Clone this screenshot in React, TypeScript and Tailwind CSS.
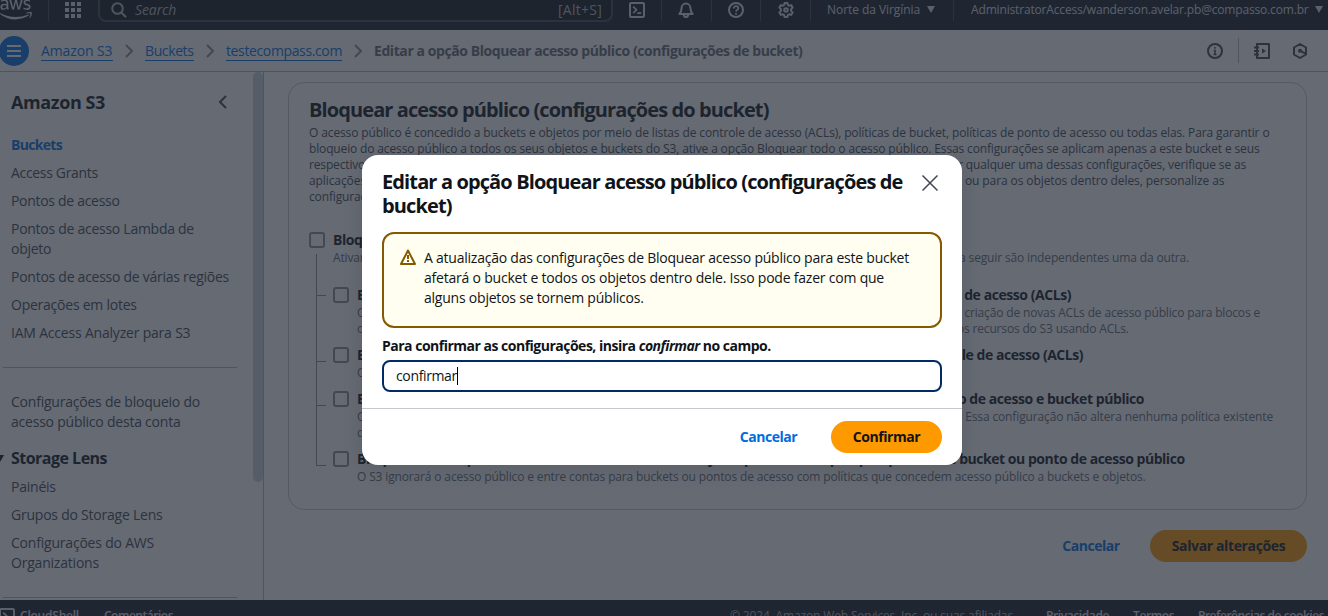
import type { ReactNode } from "react";
import { FaAws } from "react-icons/fa";

function Line({ className = "", children }: { className?: string; children: ReactNode }) {
  return <span className={`block whitespace-nowrap ${className}`}>{children}</span>;
}

function NavDivider({ className = "" }: { className?: string }) {
  return <span className={`block h-[22px] w-px shrink-0 bg-[#424650] ${className}`} />;
}

function NavIcon({ className = "", children }: { className?: string; children: ReactNode }) {
  return (
    <svg viewBox="0 0 16 16" className={`h-4 w-4 shrink-0 fill-none stroke-[#dedee3] stroke-2 ${className}`} strokeLinejoin="round">
      {children}
    </svg>
  );
}

function Caret({ className }: { className: string }) {
  return (
    <svg viewBox="0 0 8 7" className={`h-[7px] w-2 shrink-0 ${className}`}>
      <path d="M0 0h8L4 7z" />
    </svg>
  );
}

function TopNav() {
  return (
    <header className="-mt-[11px] flex h-[41px] shrink-0 items-center bg-[#161d26] text-[#dedee3]">
      <div className="flex w-12 items-center">
        <FaAws className="-ml-px h-[33px] w-[33px] text-[#dedee3]" />
      </div>
      <NavDivider />
      <div className="ml-4 grid grid-cols-3 gap-[2px]">
        {Array.from({ length: 9 }, (_, i) => (
          <span key={i} className="h-1 w-1 bg-[#dedee3]" />
        ))}
      </div>
      <div className="mt-[-7px] ml-[17px] flex h-8 w-[515px] shrink-0 items-center rounded-lg border-2 border-[#424650] bg-[#0f141a] pt-[7px] pr-[9px] pl-[11px] text-[14px] text-[#b4b4bb]">
        <svg viewBox="0 0 16 16" className="h-4 w-4 fill-none stroke-[#b4b4bb] stroke-2">
          <circle cx="6.5" cy="6.5" r="5.3" />
          <path d="M10.3 10.5 15 15.2" />
        </svg>
        <span className="ml-2 tracking-[-0.1px] italic">Search</span>
        <span className="ml-auto tracking-[0.25px]">[Alt+S]</span>
      </div>
      <NavIcon className="ml-4">
        <rect x="1" y="1" width="14" height="14" rx="1.2" />
        <path d="m4.2 4.6 3.3 3.2-3.3 3.2M8.2 11.2h4" strokeWidth="1.7" />
      </NavIcon>
      <NavDivider className="ml-4" />
      <NavIcon className="ml-4">
        <path d="M3.6 6a4.4 4.4 0 0 1 8.8 0c0 3 .8 4.3 2.2 6H1.4C2.8 10.3 3.6 9 3.6 6z" />
        <path d="M5.7 12.5c.2 1.5 1.1 2.5 2.3 2.5s2.1-1 2.3-2.5" />
      </NavIcon>
      <NavDivider className="ml-[17px]" />
      <NavIcon className="ml-4">
        <circle cx="8" cy="8" r="7" />
        <path d="M5.7 6.5c0-1.5 1-2.3 2.3-2.3s2.3.8 2.3 2c0 1.6-2.3 1.7-2.3 3.5M8 10.9v1.8" strokeWidth="1.7" />
      </NavIcon>
      <NavDivider className="ml-4" />
      <NavIcon className="ml-[17px]">
        <path d="M6.6 1h2.8l.5 2 1.2.7 2-.6 1.5 2.5-1.5 1.5v1.8l1.5 1.5-1.5 2.5-2-.6-1.2.7-.5 2H6.6l-.5-2-1.2-.7-2 .6-1.5-2.5 1.5-1.5V7.1L1.4 5.6l1.5-2.5 2 .6L6.1 3z" />
        <circle cx="8" cy="8" r="1.8" />
      </NavIcon>
      <NavDivider className="ml-4" />
      <span className="ml-4 text-[12px] font-medium tracking-[-0.06px] whitespace-nowrap">Norte da Virgínia</span>
      <Caret className="ml-[7px] fill-[#dedee3]" />
      <NavDivider className="ml-[18px]" />
      <span className="ml-[17px] text-[12px] font-medium tracking-[-0.17px] whitespace-nowrap">
        AdministratorAccess/wanderson.avelar.pb@compasso.com.br
      </span>
      <Caret className="ml-[6px] fill-[#dedee3]" />
    </header>
  );
}

function Separator({ className }: { className: string }) {
  return (
    <svg viewBox="0 0 8 14" className={`h-3.5 w-2 shrink-0 fill-none stroke-[#8c8c94] stroke-2 ${className}`}>
      <path d="m1 1 6 6-6 6" />
    </svg>
  );
}

function BreadcrumbBar() {
  const link = "whitespace-nowrap border-b border-[#006ce0] text-[#006ce0] leading-[19px]";
  return (
    <div className="flex h-[42px] shrink-0 items-center border-b border-[#b4b4bb] bg-white text-[14px]">
      <div className="-ml-px flex h-[30px] w-[30px] shrink-0 items-center justify-center rounded-full bg-[#006ce0]">
        <div className="flex w-3.5 flex-col gap-[3px]">
          <span className="h-0.5 bg-white" />
          <span className="h-0.5 bg-white" />
          <span className="h-0.5 bg-white" />
        </div>
      </div>
      <a className={`ml-3 w-[72px] tracking-[-0.11px] ${link}`}>Amazon S3</a>
      <Separator className="ml-3" />
      <a className={`ml-3 w-[49px] tracking-[-0.39px] ${link}`}>Buckets</a>
      <Separator className="ml-3" />
      <a className={`ml-3 w-[116px] tracking-[-0.37px] ${link}`}>testecompass.com</a>
      <Separator className="ml-3" />
      <span className="ml-3 font-bold tracking-[-0.42px] whitespace-nowrap text-[#656871]">
        Editar a opção Bloquear acesso público (configurações de bucket)
      </span>
      <div className="ml-auto flex items-center pr-5">
        <svg viewBox="0 0 16 16" className="h-4 w-4 fill-none stroke-[#424650] stroke-2">
          <circle cx="8" cy="8" r="7" />
          <path d="M8 4v1.8M6.8 7.5H8V11M6.5 11.5h3" strokeWidth="1.5" />
        </svg>
        <span className="ml-[15px] h-[25px] w-px bg-[#b4b4bb]" />
        <svg viewBox="0 0 16 16" className="ml-[15px] h-4 w-4 fill-none stroke-[#424650] stroke-2" strokeLinejoin="round">
          <path d="M3 1h12v14H3zM0 4.500h5M0 8h5M0 11.500h5" />
          <path d="M8 5.500v5L12 8z" className="fill-[#424650] stroke-none" />
        </svg>
        <svg viewBox="0 0 16 16" className="ml-[22px] h-4 w-4 fill-none stroke-[#424650] stroke-2" strokeLinejoin="round">
          <path d="M8 1l6 3.500v7L8 15l-6-3.500v-7z" />
          <circle cx="8" cy="7.7" r="2" className="fill-[#424650] stroke-none" />
          <path d="M8 7.700l5.500 3" />
        </svg>
      </div>
    </div>
  );
}

function Sidebar() {
  return (
    <aside className="flex w-[264px] shrink-0 border-r border-[#b4b4bb] bg-white">
      <div className="w-[253px] shrink-0 text-[14px] leading-5 text-[#424650]">
        <div className="flex h-[63px] items-center pr-[26px] pb-[3px] pl-[11px]">
          <h2 className="text-[18px] font-bold tracking-[-0.4px] text-[#0f141a]">Amazon S3</h2>
          <svg viewBox="0 0 8 14" className="ml-auto h-3.5 w-2 fill-none stroke-[#424650] stroke-2">
            <path d="M7 1 1 7l6 6" />
          </svg>
        </div>
        <nav className="flex flex-col gap-2 pl-[11px]">
          <Line className="font-bold tracking-[-0.7px] text-[#006ce0]">Buckets</Line>
          <Line className="tracking-[-0.33px]">Access Grants</Line>
          <Line className="tracking-[-0.3px]">Pontos de acesso</Line>
          <Line className="tracking-[-0.27px]">Pontos de acesso Lambda de<br />objeto</Line>
          <Line className="tracking-[-0.26px]">Pontos de acesso de várias regiões</Line>
          <Line className="tracking-[-0.24px]">Operações em lotes</Line>
          <Line className="tracking-[-0.2px]">IAM Access Analyzer para S3</Line>
        </nav>
        <hr className="mt-6 mr-4 ml-[3px] border-[#b4b4bb]" />
        <nav className="mt-6 pl-[11px]">
          <Line className="tracking-[-0.223px]">Configurações de bloqueio do<br />acesso público desta conta</Line>
          <div className="mt-4 -ml-[15px] flex items-center">
            <Caret className="fill-[#0f141a]" />
            <h3 className="ml-[7px] text-[16px] leading-[21px] font-bold tracking-[-0.517px] text-[#0f141a]">Storage Lens</h3>
          </div>
          <div className="mt-2 flex flex-col gap-2">
            <Line className="tracking-[-0.23px]">Painéis</Line>
            <Line className="tracking-[-0.23px]">Grupos do Storage Lens</Line>
            <Line className="tracking-[-0.207px]">Configurações do AWS<br />Organizations</Line>
          </div>
        </nav>
        <hr className="mt-6 mr-4 ml-[3px] border-[#b4b4bb]" />
      </div>
      <div className="h-[410px] w-[10px] rounded-full bg-[#c8d3dc]" />
    </aside>
  );
}

function Checkbox() {
  return <span className="mt-0.5 h-4 w-4 shrink-0 rounded-[3px] border-2 border-[#8c8c94]" />;
}

function SubOption({ title, titleClass, last = false, first = false, children }: {
  title: string; titleClass: string; last?: boolean; first?: boolean; children: ReactNode;
}) {
  return (
    <div className="flex">
      <div className={`flex w-[17px] shrink-0 flex-col ${last ? "" : "-mb-2"}`}>
        <span className={`w-2.5 border-b border-l border-[#8c8c94] ${first ? "-mt-[31px] h-[42px]" : "h-[17px]"}`} />
        {!last && <span className="grow border-l border-[#8c8c94]" />}
      </div>
      <Checkbox />
      <div className="ml-2 w-[930px]">
        <Line className={`text-[14px] leading-5 font-bold text-[#0f141a] ${titleClass}`}>{title}</Line>
        <div className="text-[12px] leading-4 text-[#656871]">{children}</div>
      </div>
    </div>
  );
}

function SettingsCard() {
  return (
    <section className="h-[428px] w-[1019px] rounded-2xl border border-[#c6c6cd] bg-white pt-[15px] pl-5">
      <h1 className="text-[20px] leading-6 font-bold tracking-[-0.902px] whitespace-nowrap text-[#0f141a]">
        Bloquear acesso público (configurações do bucket)
      </h1>
      <div className="mt-[3px] text-[12px] leading-4 text-[#424650]">
        <Line className="tracking-[-0.122px]">O acesso público é concedido a buckets e objetos por meio de listas de controle de acesso (ACLs), políticas de bucket, políticas de ponto de acesso ou todas elas. Para garantir o</Line>
        <Line className="tracking-[-0.145px]">bloqueio do acesso público a todos os seus objetos e buckets do S3, ative a opção Bloquear todo o acesso público. Essas configurações se aplicam apenas a este bucket e seus</Line>
        <Line className="tracking-[-0.153px]">respectivos pontos de acesso. A AWS recomenda ativar a opção Bloquear todo o acesso público. Porém, antes de aplicar qualquer uma dessas configurações, verifique se as</Line>
        <Line className="tracking-[-0.09px]">aplicações funcionarão corretamente sem o acesso público. Caso precise de algum nível de acesso público aos buckets ou para os objetos dentro deles, personalize as</Line>
        <Line className="tracking-[-0.14px]">configurações individuais abaixo de acordo com seus casos de uso de armazenamento específicos.</Line>
      </div>
      <div className="mt-[25px] flex">
        <Checkbox />
        <div className="ml-2">
          <Line className="text-[14px] leading-5 font-bold tracking-[-0.45px] text-[#0f141a]">Bloquear todo o acesso público</Line>
          <Line className="text-[12px] leading-4 tracking-[-0.152px] text-[#656871]">Ativar essa configuração é o mesmo que ativar todas as quatro configurações abaixo. Cada uma das configurações a seguir são independentes uma da outra.</Line>
        </div>
      </div>
      <div className="mt-[19px] ml-[7px] flex flex-col gap-2">
        <SubOption first titleClass="tracking-[-0.442px]" title="Bloquear acesso público a buckets e objetos concedidos por meio de novas listas de controle de acesso (ACLs)">
          <Line className="tracking-[-0.153px]">O S3 bloqueará as permissões de acesso público aplicadas a blocos ou objetos recém-adicionados e impedirá a criação de novas ACLs de acesso público para blocos e</Line>
          <Line className="tracking-[-0.167px]">objetos existentes. Essa configuração não altera nenhuma permissão existente que permita o acesso público aos recursos do S3 usando ACLs.</Line>
        </SubOption>
        <SubOption titleClass="tracking-[-0.463px]" title="Bloquear acesso público a buckets e objetos concedidos por meio de qualquer lista de controle de acesso (ACLs)">
          <Line className="tracking-[-0.15px]">O S3 ignorará todas as ACLs que concedem acesso público a buckets e objetos.</Line>
        </SubOption>
        <SubOption titleClass="tracking-[-0.438px]" title="Bloquear acesso público a buckets e objetos concedidos por meio de novas políticas de ponto de acesso e bucket público">
          <Line className="tracking-[-0.129px]">O S3 bloqueará novas políticas de bucket e ponto de acesso que concedem acesso público a buckets e objetos. Essa configuração não altera nenhuma política existente</Line>
          <Line className="tracking-[-0.15px]">que permita acesso público aos recursos do S3.</Line>
        </SubOption>
        <SubOption last titleClass="tracking-[-0.465px]" title="Bloquear acesso público e entre contas a buckets e objetos por meio de qualquer política de bucket ou ponto de acesso público">
          <Line className="tracking-[-0.148px]">O S3 ignorará o acesso público e entre contas para buckets ou pontos de acesso com políticas que concedem acesso público a buckets e objetos.</Line>
        </SubOption>
      </div>
    </section>
  );
}

function Footer() {
  return (
    <footer className="flex h-4 shrink-0 overflow-hidden bg-[#161d26] pt-2 text-[12px] leading-4 font-semibold whitespace-nowrap text-[#dedee3]">
      <svg viewBox="0 0 16 16" className="-ml-px h-4 w-4 shrink-0 fill-none stroke-[#dedee3] stroke-2">
        <rect x="1" y="1" width="14" height="14" rx="1.2" />
        <path d="m4.2 4.6 3.3 3.2-3.3 3.2M8.2 11.2h4" strokeWidth="1.7" />
      </svg>
      <span className="ml-[5px] w-[84px] tracking-[-0.22px]">CloudShell</span>
      <span className="tracking-[-0.483px]">Comentários</span>
      <span className="ml-auto w-[316px] font-normal tracking-[-0.15px] text-[#b4b4bb]">© 2024, Amazon Web Services, Inc. ou suas afiliadas.</span>
      <span className="w-[87px] tracking-[-0.4px]">Privacidade</span>
      <span className="w-[65px] tracking-[-0.4px]">Termos</span>
      <span className="w-[130px] tracking-[-0.467px]">Preferências de cookies</span>
    </footer>
  );
}

function ConfirmDialog() {
  return (
    <div className="absolute inset-0 bg-[rgba(35,43,55,0.7)] pt-[155px] pl-[362px]">
      <div role="dialog" className="h-[310px] w-[600px] rounded-2xl bg-white text-[14px] leading-5 text-[#0f141a] shadow-[0_4px_20px_1px_rgba(0,7,22,0.1)]">
        <div className="flex justify-between px-5 pt-[15px]">
          <h2 className="text-[20px] leading-6 font-bold tracking-[-0.874px] whitespace-nowrap">
            Editar a opção Bloquear acesso público (configurações de<br />bucket)
          </h2>
          <svg viewBox="0 0 16 16" className="mt-[5px] mr-1 h-4 w-4 fill-none stroke-[#424650] stroke-[1.5]">
            <path d="m.5.5 15 15M15.5.5l-15 15" />
          </svg>
        </div>
        <div className="mx-5 mt-[14px] flex h-24 rounded-xl border-2 border-[#855900] bg-[#fffef0] pt-[14px] pl-4">
          <svg viewBox="0 0 16 16" className="mt-px h-4 w-4 fill-none stroke-[#855900] stroke-2" strokeLinejoin="round">
            <path d="M8 1.5 1 15h14z" />
            <path d="M8 6v4M8 11v2" />
          </svg>
          <div className="ml-2">
            <Line className="tracking-[-0.23px]">A atualização das configurações de Bloquear acesso público para este bucket</Line>
            <Line className="tracking-[-0.213px]">afetará o bucket e todos os objetos dentro dele. Isso pode fazer com que</Line>
            <Line className="tracking-[-0.22px]">alguns objetos se tornem públicos.</Line>
          </div>
        </div>
        <label className="mx-5 mt-2 block font-bold tracking-[-0.5px] whitespace-nowrap">
          Para confirmar as configurações, insira <em>confirmar</em> no campo.
        </label>
        <div className="mx-5 mt-1 flex h-8 items-center rounded-lg border-2 border-[#002b66] bg-white pl-3">
          <span className="tracking-[-0.36px]">confirmar</span>
          <span className="h-[18px] w-px bg-black" />
        </div>
        <div className="mt-4 flex justify-end border-t border-[#c6c6cd] pt-3 pr-5 font-bold">
          <button className="w-[99px] text-center tracking-[-0.454px] text-[#006ce0]">Cancelar</button>
          <button className="ml-[13px] h-8 w-[111px] rounded-full bg-[#ff9900] tracking-[-0.433px]">Confirmar</button>
        </div>
      </div>
    </div>
  );
}

export default function App() {
  return (
    <div className="relative flex h-[616px] w-[1328px] flex-col overflow-hidden bg-white font-['Open_Sans',sans-serif]">
      <TopNav />
      <BreadcrumbBar />
      <div className="flex h-[528px] shrink-0 overflow-hidden">
        <Sidebar />
        <main className="pt-[10px] pl-6">
          <SettingsCard />
          <div className="mt-5 flex justify-end text-[14px] leading-5 font-bold">
            <button className="w-[98px] tracking-[-0.454px] text-[#006ce0]">Cancelar</button>
            <button className="ml-[10px] h-8 w-[157px] rounded-full bg-[#ff9900] tracking-[-0.373px] text-[#0f141a]">Salvar alterações</button>
          </div>
        </main>
      </div>
      <Footer />
      <ConfirmDialog />
    </div>
  );
}
